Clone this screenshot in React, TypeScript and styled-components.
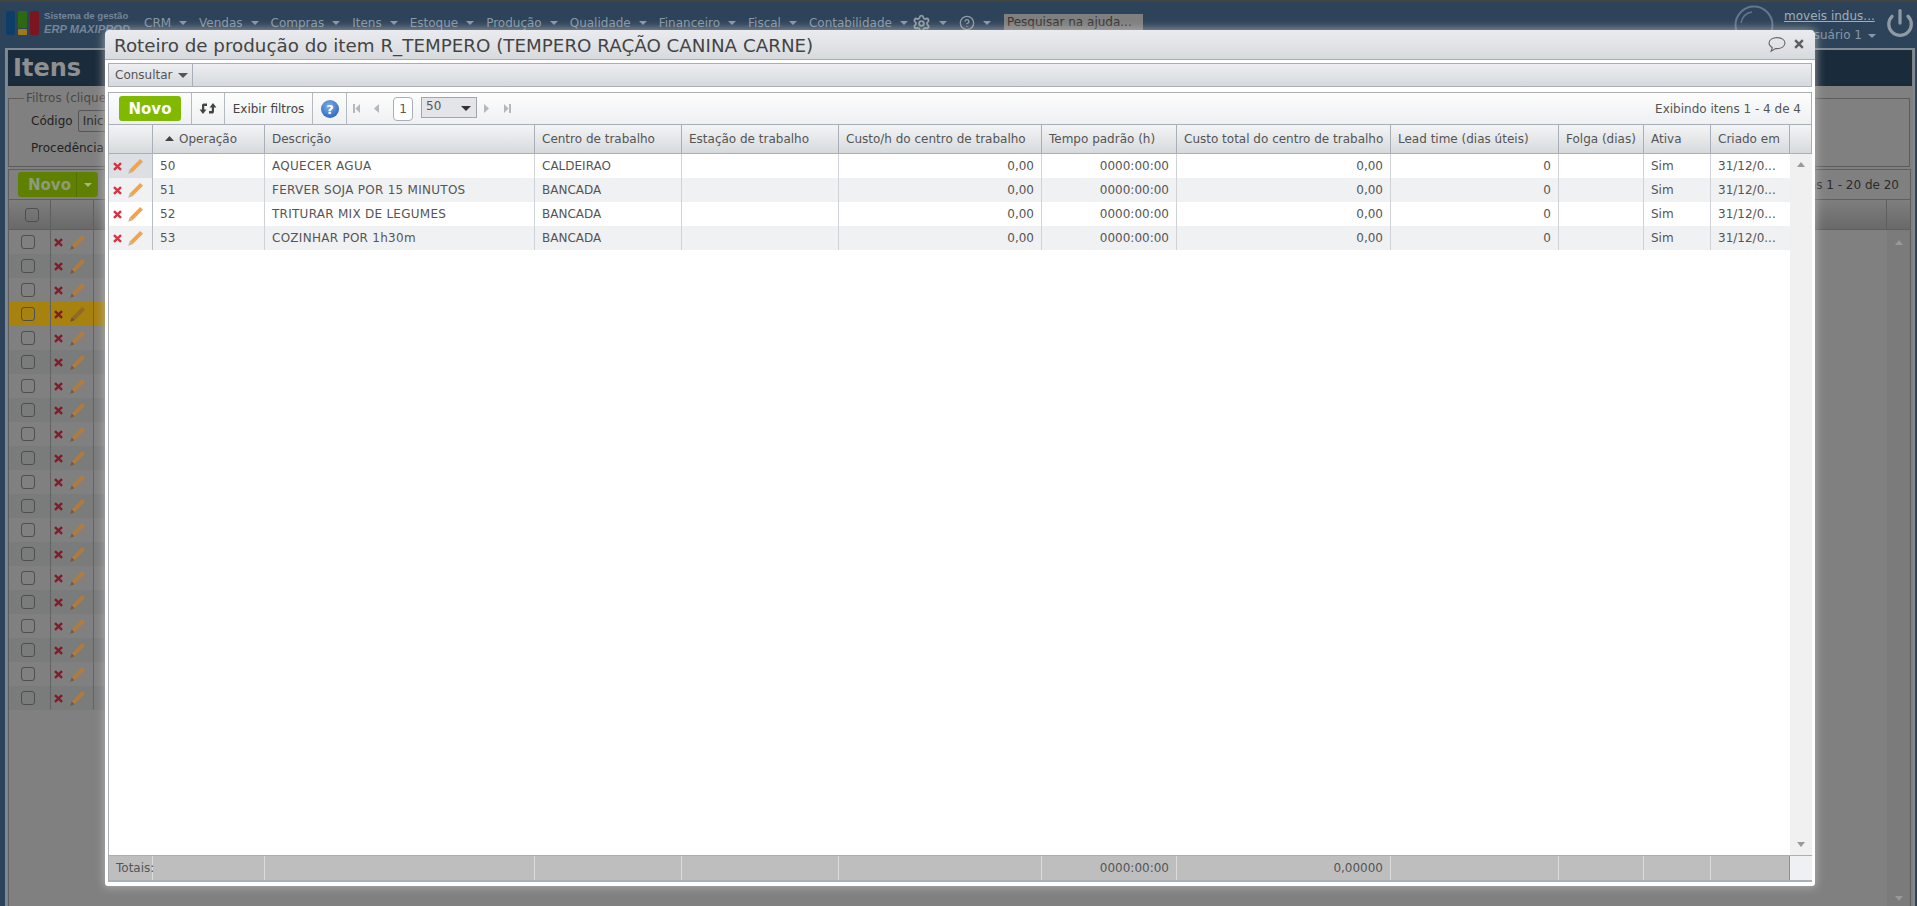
import React from "react";
import styled, { createGlobalStyle } from "styled-components";
import { CircleHelp, Settings, Power } from "lucide-react";

const GlobalStyle = createGlobalStyle`
  html, body { margin: 0; padding: 0; overflow: hidden; }
  * { box-sizing: border-box; }
  body { font-family: "DejaVu Sans", Verdana, sans-serif; font-size: 12px; color: #555; }
`;

const Page = styled.div`
  position: relative;
  width: 1917px;
  height: 906px;
  overflow: hidden;
  background: #2d4359;
  border-top: 2px solid #45453f;
  display: flex;
  flex-direction: column;
`;

/* ---------- dimmed page behind the dialog ---------- */
const TopBar = styled.header`
  height: 46px;
  padding-left: 6px;
  display: flex;
  align-items: flex-start;
  color: #8798a8;
`;
const Logo = styled.svg`
  width: 33px;
  height: 25px;
  margin-top: 9px;
  flex: none;
`;
const Brand = styled.div`
  margin: 7px 0 0 5px;
  width: 100px;
  flex: none;
  font-family: "Liberation Sans", Arial, sans-serif;
  font-size: 9.6px;
  font-weight: 700;
  line-height: 13px;
  white-space: nowrap;
  color: #74869a;
  b { display: block; font-size: 11.2px; font-style: italic; line-height: 15px; }
`;
const Nav = styled.nav`
  display: flex;
  align-items: center;
  height: 18px;
  margin-top: 12px;
  gap: 12px;
`;
const NavItem = styled.span`
  display: flex;
  align-items: center;
  gap: 8px;
  white-space: nowrap;
`;
const GearItem = styled(NavItem)`
  margin-left: -8px;
`;
const Caret = styled.i<{ $c?: string; $w?: number }>`
  display: inline-block;
  width: 0;
  height: 0;
  flex: none;
  border-left: ${(p) => p.$w ?? 4}px solid transparent;
  border-right: ${(p) => p.$w ?? 4}px solid transparent;
  border-top: ${(p) => p.$w ?? 4}px solid ${(p) => p.$c ?? "#8798a8"};
`;
const HelpSearch = styled.div`
  width: 139px;
  height: 18px;
  margin-left: 1px;
  padding: 1px 3px;
  background: #7f7f7f;
  color: #333;
  font-size: 12px;
  white-space: nowrap;
`;
const UserArea = styled.div`
  margin-left: auto;
  display: flex;
  align-items: flex-start;
  color: #8798a8;
`;
const Avatar = styled.svg`
  width: 40px;
  height: 40px;
  margin: 3px 10px 0 0;
  flex: none;
`;
const UserText = styled.div`
  width: 100px;
  margin-top: 5px;
  line-height: 19px;
  a { display: block; text-decoration: underline; color: #a0adb9; }
  span { display: flex; align-items: center; gap: 6px; justify-content: flex-end; padding-right: 8px; }
`;
const PowerBox = styled.div`
  width: 33px;
  margin-top: 6px;
  padding-left: 1px;
`;

const Panel = styled.main`
  flex: 1;
  margin: 0 2px 0 5px;
  padding: 0 1px;
  border: 2px solid #808a94;
  border-bottom: 0;
  background: #808080;
  display: flex;
  flex-direction: column;
`;
const PanelHead = styled.div`
  height: 36px;
  flex: none;
  background: #1a2b3b;
  color: #8f8f8f;
  font-size: 24px;
  font-weight: 700;
  line-height: 36px;
  padding-left: 5px;
`;
const Filters = styled.fieldset`
  height: 76px;
  margin: 5px 2px 0 0;
  padding: 2px 0 0;
  border: 1px solid #5c5c5c;
  flex: none;
  color: #222;
  legend { margin-left: 15px; padding: 0 2px; color: #484848; font-size: 12px; white-space: nowrap; }
`;
const FilterRow = styled.div`
  display: flex;
  align-items: center;
  gap: 5px;
  height: 27px;
  padding-left: 22px;
  white-space: nowrap;
`;
const FilterInput = styled.span`
  border: 1px solid #555;
  border-radius: 2px;
  height: 22px;
  width: 60px;
  padding: 3px 4px;
  color: #2a2a2a;
`;
const BackGrid = styled.section`
  flex: 1;
  margin: 2px 1px 0 0;
  border: 1px solid #5f5f5f;
  border-bottom: 0;
  display: flex;
  flex-direction: column;
`;
const BackBar = styled.div`
  height: 30px;
  flex: none;
  display: flex;
  align-items: center;
  justify-content: space-between;
  padding: 0 11px 0 9px;
  border-bottom: 1px solid #5f5f5f;
  color: #2b2b2b;
`;
const BackNovo = styled.div`
  width: 80px;
  height: 25px;
  border-radius: 3px;
  background: #5f8000;
  color: #8f9a7d;
  font-size: 15px;
  font-weight: 700;
  display: flex;
  align-items: center;
  justify-content: space-between;
  padding-left: 10px;
  span {
    width: 22px;
    height: 25px;
    border-left: 1px solid #527000;
    display: flex;
    align-items: center;
    justify-content: center;
  }
  i { border-top-color: #a5b48b; }
`;
const BackHead = styled.div`
  display: grid;
  grid-template-columns: 42px 43px 1fr 23px;
  height: 30px;
  background: linear-gradient(#7e7e7e, #696969);
  border-bottom: 1px solid #5f5f5f;
  > span { display: flex; align-items: center; border-right: 1px solid #5f5f5f; }
  > span:last-child { border-right: 0; }
`;
const BackRow = styled.div<{ $bg: string }>`
  display: grid;
  grid-template-columns: 42px 43px 1fr 23px;
  height: 24px;
  background: linear-gradient(${(p) => p.$bg}, ${(p) => p.$bg}) no-repeat;
  background-size: 1000px 100%;
  > span { display: flex; align-items: center; }
  > span:nth-child(-n + 2) { border-right: 1px solid #636363; }
  > span:last-child { background: #7b7b7b; justify-content: center; }
`;
const CheckBox = styled.b<{ $ml: number }>`
  display: block;
  width: 14px;
  height: 14px;
  margin-left: ${(p) => p.$ml}px;
  border: 1.5px solid #4f4f4f;
  border-radius: 3px;
`;
const BackActions = styled.span`
  gap: 6px;
  padding-left: 3px;
`;
const BackFill = styled.div`
  flex: 1;
  display: flex;
  justify-content: flex-end;
`;
const BackScroll = styled.div`
  width: 23px;
  background: #7b7b7b;
  display: flex;
  align-items: flex-end;
  justify-content: center;
  padding-bottom: 5px;
`;

/* ---------- dialog ---------- */
const Dialog = styled.div`
  position: absolute;
  left: 105px;
  top: 28px;
  width: 1710px;
  height: 856px;
  background: #fff;
  border-radius: 5px 5px 3px 3px;
  box-shadow: 0 0 10px 1px rgba(190, 190, 190, 0.75);
  display: flex;
  flex-direction: column;
  padding: 0 3px 4px;
`;
const TitleBar = styled.div`
  height: 30px;
  margin: 0 -3px;
  flex: none;
  padding: 2px 11px 0 9px;
  display: flex;
  align-items: center;
  justify-content: space-between;
  border-radius: 5px 5px 0 0;
  border-bottom: 1px solid #a8afb6;
  background: linear-gradient(#eaebee, #d8dbde);
`;
const Title = styled.h1`
  margin: 0;
  font-size: 18.3px;
  font-weight: 400;
  color: #444;
  white-space: nowrap;
`;
const TitleTools = styled.div`
  display: flex;
  align-items: center;
  gap: 7px;
  margin-top: -3px;
`;
const MenuBar = styled.div`
  height: 24px;
  margin-top: 3px;
  flex: none;
  display: flex;
  border: 1px solid #a8afb6;
  background: linear-gradient(#eceef0, #d6d9dd);
`;
const MenuButton = styled.div`
  display: flex;
  align-items: center;
  gap: 5px;
  width: 84px;
  padding-left: 6px;
  border-right: 1px solid #a8afb6;
  color: #555;
`;
const GridBox = styled.section`
  flex: 1;
  margin-top: 5px;
  min-height: 0;
  display: flex;
  flex-direction: column;
  border: 1px solid #a8afb6;
  border-bottom-width: 2px;
`;
const Toolbar = styled.div`
  height: 31px;
  flex: none;
  display: flex;
  align-items: center;
  background: linear-gradient(#fdfdfd, #eef0f2);
  padding-left: 10px;
`;
const NovoButton = styled.button`
  width: 62px;
  height: 25px;
  margin-right: 10px;
  padding: 0;
  border: 0;
  border-radius: 3px;
  background: #80b900;
  color: #fff;
  font: 700 15px "DejaVu Sans", sans-serif;
`;
const ToolCell = styled.div<{ $w: number }>`
  width: ${(p) => p.$w}px;
  height: 31px;
  flex: none;
  display: flex;
  align-items: center;
  justify-content: center;
  border-left: 1px solid #b5bac0;
  color: #444;
  white-space: nowrap;
`;
const Pager = styled.div`
  display: flex;
  align-items: center;
  height: 31px;
  border-left: 1px solid #b5bac0;
  padding-left: 5px;
`;
const PageBox = styled.div`
  width: 20px;
  height: 24px;
  margin: 0 8px 0 11px;
  border: 1px solid #a8afb6;
  border-radius: 4px;
  background: #fff;
  text-align: center;
  line-height: 22px;
  color: #555;
`;
const SizeSelect = styled.div`
  width: 56px;
  height: 21px;
  margin: -2px 4px 0 0;
  padding: 1px 4px;
  border: 1px solid #a0a6ae;
  background: #e3e5e8;
  display: flex;
  justify-content: space-between;
  color: #555;
  i { margin: 7px 1px 0 0; }
`;
const PagerStatus = styled.div`
  margin-left: auto;
  padding-right: 10px;
  color: #555;
`;
const HeadRow = styled.div`
  display: grid;
  grid-template-columns: var(--cols);
  height: 30px;
  flex: none;
  border-top: 1px solid #a8afb6;
  border-bottom: 1px solid #a8afb6;
  background: linear-gradient(#f3f4f5, #d7dadd);
`;
const HeadCell = styled.div`
  display: flex;
  align-items: center;
  gap: 5px;
  padding: 0 0 1px 7px;
  border-right: 1px solid #a8afb6;
  white-space: nowrap;
  overflow: hidden;
  color: #555;
  &:last-child { border-right: 0; }
`;
const HeadSortCell = styled(HeadCell)`
  padding-left: 12px;
`;
const BodyWrap = styled.div`
  flex: 1;
  min-height: 0;
  display: flex;
`;
const Rows = styled.div`
  flex: 1;
`;
const DataRow = styled.div<{ $odd: boolean }>`
  display: grid;
  grid-template-columns: var(--body-cols);
  height: 24px;
  background: ${(p) => (p.$odd ? "#f0f1f3" : "#fff")};
`;
const Cell = styled.div<{ $right?: boolean }>`
  display: flex;
  align-items: center;
  justify-content: ${(p) => (p.$right ? "flex-end" : "flex-start")};
  padding: 0 7px;
  border-right: 1px solid #cfd3d8;
  white-space: nowrap;
  color: #555;
  &:last-child { border-right: 0; }
`;
const DescCell = styled(Cell)`
  letter-spacing: 0.27px;
`;
const ActionCell = styled.div<{ $active: boolean }>`
  display: flex;
  align-items: center;
  gap: 5px;
  padding-left: 4px;
  border-right: 1px solid #b8bdc3;
  background: ${(p) => (p.$active ? "#dcdfe3" : "transparent")};
`;
const ScrollTrack = styled.div`
  width: 22px;
  flex: none;
  background: #f0f0f0;
  display: flex;
  flex-direction: column;
  align-items: center;
  justify-content: space-between;
  padding: 8px 0 8px;
`;
const ArrowUp = styled.i`
  width: 0;
  height: 0;
  border-left: 4.5px solid transparent;
  border-right: 4.5px solid transparent;
  border-bottom: 5px solid #999;
`;
const ArrowDown = styled(ArrowUp)`
  border-bottom: 0;
  border-top: 5px solid #999;
`;
const TotalsRow = styled.div`
  display: grid;
  grid-template-columns: var(--cols);
  height: 25px;
  flex: none;
  border-top: 1px solid #a8afb6;
  background: #bebebe;
`;
const TotalCell = styled.div`
  display: flex;
  align-items: center;
  justify-content: flex-end;
  padding: 0 7px;
  border-right: 1px solid #dcdcdc;
  white-space: nowrap;
  color: #555;
  &:first-child { justify-content: flex-start; }
  &:nth-last-child(2) { border-right-color: #8f8f8f; }
  &:last-child { background: #eef0f3; border-right: 0; }
`;

const Pencil = ({ body = "#f3a349", tip = "#c9b08e" }: { body?: string; tip?: string }) => (
  <svg width="17" height="17" viewBox="0 0 17 17" style={{ flex: "none" }}>
    <path d="M13.200 1 16 3.800 5.500 14.300 2.700 11.500Z" fill={body} />
    <path d="M2.700 11.500 5.500 14.300 1.200 15.800Z" fill={tip} />
  </svg>
);
const Cross = ({ dim }: { dim?: boolean }) => (
  <svg width="9" height="9" viewBox="0 0 9 9" style={{ flex: "none" }}>
    <path d="M1 1.200 8 7.800M8 1.200 1 7.800" stroke={dim ? "#861a26" : "#d33442"} strokeWidth="2.4" />
  </svg>
);

const cols = [44, 112, 270, 147, 157, 203, 135, 214, 168, 85, 67, 79, 22];
const headers = [
  "", "Operação", "Descrição", "Centro de trabalho", "Estação de trabalho",
  "Custo/h do centro de trabalho", "Tempo padrão (h)", "Custo total do centro de trabalho",
  "Lead time (dias úteis)", "Folga (dias)", "Ativa", "Criado em", "",
];
const rows = [
  ["50", "AQUECER AGUA", "CALDEIRAO"],
  ["51", "FERVER SOJA POR 15 MINUTOS", "BANCADA"],
  ["52", "TRITURAR MIX DE LEGUMES", "BANCADA"],
  ["53", "COZINHAR POR 1h30m", "BANCADA"],
];
const navItems = ["CRM", "Vendas", "Compras", "Itens", "Estoque", "Produção", "Qualidade", "Financeiro", "Fiscal", "Contabilidade"];
const backRows = Array.from({ length: 20 }, (_, i) => i);

export default function App() {
  const gridVars = {
    "--cols": cols.map((c) => `${c}px`).join(" "),
    "--body-cols": cols.slice(0, -1).map((c) => `${c}px`).join(" "),
  } as React.CSSProperties;

  return (
    <Page>
      <GlobalStyle />
      <TopBar>
        <Logo viewBox="0 0 33 25">
          <rect x="0" y="0" width="9" height="24" rx="2" fill="#0e3e68" />
          <rect x="12" y="0" width="9" height="17" rx="1" fill="#2c6a12" />
          <rect x="12" y="18" width="9" height="6" rx="1" fill="#9a7a1a" />
          <rect x="24" y="0" width="9" height="24" rx="2" fill="#7b1620" />
        </Logo>
        <Brand>
          Sistema de gestão
          <b>ERP MAXIPROD</b>
        </Brand>
        <Nav>
          {navItems.map((n) => (
            <NavItem key={n}>
              {n}
              <Caret />
            </NavItem>
          ))}
          <GearItem>
            <Settings size={19} color="#8f9aa5" strokeWidth={2.4} />
            <Caret />
          </GearItem>
          <NavItem>
            <CircleHelp size={16} color="#8f9aa5" />
            <Caret />
          </NavItem>
          <HelpSearch>Pesquisar na ajuda...</HelpSearch>
        </Nav>
        <UserArea>
          <Avatar viewBox="0 0 40 40">
            <circle cx="20" cy="20" r="18.5" fill="none" stroke="#64778a" strokeWidth="2" />
            <path d="M7 18C8 12 12 8 18 7" fill="none" stroke="#64778a" strokeWidth="1.500" />
          </Avatar>
          <UserText>
            <a>moveis indus...</a>
            <span>
              Usuário 1
              <Caret />
            </span>
          </UserText>
          <PowerBox>
            <Power size={30} color="#8f9aa5" strokeWidth={2.6} />
          </PowerBox>
        </UserArea>
      </TopBar>

      <Panel>
        <PanelHead>Itens</PanelHead>
        <Filters>
          <legend>Filtros (clique para expandir)</legend>
          <FilterRow>
            Código
            <FilterInput>Inicia</FilterInput>
          </FilterRow>
          <FilterRow>Procedência</FilterRow>
        </Filters>
        <BackGrid>
          <BackBar>
            <BackNovo>
              Novo
              <span>
                <Caret />
              </span>
            </BackNovo>
            <span>Exibindo itens 1 - 20 de 20</span>
          </BackBar>
          <BackHead>
            <span>
              <CheckBox $ml={16} />
            </span>
            <span />
            <span />
            <span />
          </BackHead>
          {backRows.map((i) => (
            <BackRow key={i} $bg={i === 3 ? "#a8820f" : i % 2 ? "#797c7b" : "#808080"}>
              <span>
                <CheckBox $ml={12} />
              </span>
              <BackActions>
                <Cross dim />
                {i === 3 ? <Pencil body="#8f6a2a" tip="#5f5040" /> : <Pencil body="#b57a35" tip="#6d5c48" />}
              </BackActions>
              <span />
              <span>{i === 0 && <ArrowUp />}</span>
            </BackRow>
          ))}
          <BackFill>
            <BackScroll>
              <ArrowDown />
            </BackScroll>
          </BackFill>
        </BackGrid>
      </Panel>

      <Dialog style={gridVars}>
        <TitleBar>
          <Title>Roteiro de produção do item R_TEMPERO (TEMPERO RAÇÃO CANINA CARNE)</Title>
          <TitleTools>
            <svg width="20" height="17" viewBox="0 0 18 16">
              <path d="M9 1.500C4.800 1.500 1.500 3.700 1.500 6.700C1.500 8.500 2.700 10 4.600 11L3.400 14.300L7.600 11.800C8.100 11.900 8.500 11.900 9 11.900C13.200 11.900 16.500 9.700 16.500 6.700C16.500 3.700 13.200 1.500 9 1.500Z" fill="none" stroke="#666" strokeWidth="1" />
            </svg>
            <svg width="10" height="10" viewBox="0 0 10 10">
              <path d="M1.200 1.200 8.800 8.800M8.800 1.200 1.200 8.800" stroke="#5f5f5f" strokeWidth="2.500" />
            </svg>
          </TitleTools>
        </TitleBar>
        <MenuBar>
          <MenuButton>
            Consultar
            <Caret $c="#555" $w={5} />
          </MenuButton>
        </MenuBar>
        <GridBox>
          <Toolbar>
            <NovoButton>Novo</NovoButton>
            <ToolCell $w={33}>
              <svg width="18" height="15" viewBox="0 0 18 15">
                <path d="M8 2.500H5C3.600 2.500 3 3.400 3 4.800V8.500H.6L4 13l3.400-4.500H5.200V5h2.800Z M10 12.500h3C14.400 12.500 15 11.600 15 10.200V6.500h2.400L14 2 10.600 6.500h2.200V10H10Z" fill="#444" />
              </svg>
            </ToolCell>
            <ToolCell $w={88}>Exibir filtros</ToolCell>
            <ToolCell $w={34}>
              <svg width="18" height="18" viewBox="0 0 18 18">
                <defs>
                  <radialGradient id="helpBlue" cx="45%" cy="35%" r="70%">
                    <stop offset="0" stopColor="#7fb0ec" />
                    <stop offset="1" stopColor="#2a63b8" />
                  </radialGradient>
                </defs>
                <circle cx="9" cy="9" r="9" fill="url(#helpBlue)" />
                <text x="9" y="14" textAnchor="middle" fontSize="13" fontWeight="700" fill="#fff" fontFamily="DejaVu Sans, sans-serif">?</text>
              </svg>
            </ToolCell>
            <Pager>
              <svg width="30" height="11" viewBox="0 0 30 11">
                <path d="M1 1h2v9H1ZM8 1v9L3.500 5.500ZM27 1v9l-5-4.500Z" fill="#b4b8bd" />
              </svg>
              <PageBox>1</PageBox>
              <SizeSelect>
                50
                <Caret $c="#333" $w={5} />
              </SizeSelect>
              <svg width="32" height="11" viewBox="0 0 32 11" style={{ marginLeft: 2 }}>
                <path d="M1 1v9l5-4.500ZM21 1v9l4.500-4.500ZM26 1h2v9h-2Z" fill="#b4b8bd" />
              </svg>
            </Pager>
            <PagerStatus>Exibindo itens 1 - 4 de 4</PagerStatus>
          </Toolbar>
          <HeadRow>
            {headers.map((h, i) =>
              i === 1 ? (
                <HeadSortCell key={i}>
                  <svg width="9" height="5" viewBox="0 0 9 5">
                    <path d="M0 5 4.500 0 9 5Z" fill="#444" />
                  </svg>
                  {h}
                </HeadSortCell>
              ) : (
                <HeadCell key={i}>{h}</HeadCell>
              )
            )}
          </HeadRow>
          <BodyWrap>
            <Rows>
              {rows.map((r, i) => (
                <DataRow key={r[0]} $odd={i % 2 === 1}>
                  <ActionCell $active={i === 0}>
                    <Cross />
                    <Pencil />
                  </ActionCell>
                  <Cell>{r[0]}</Cell>
                  <DescCell>{r[1]}</DescCell>
                  <Cell>{r[2]}</Cell>
                  <Cell />
                  <Cell $right>0,00</Cell>
                  <Cell $right>0000:00:00</Cell>
                  <Cell $right>0,00</Cell>
                  <Cell $right>0</Cell>
                  <Cell />
                  <Cell>Sim</Cell>
                  <Cell>31/12/0...</Cell>
                </DataRow>
              ))}
            </Rows>
            <ScrollTrack>
              <ArrowUp />
              <ArrowDown />
            </ScrollTrack>
          </BodyWrap>
          <TotalsRow>
            <TotalCell>Totais:</TotalCell>
            <TotalCell />
            <TotalCell />
            <TotalCell />
            <TotalCell />
            <TotalCell />
            <TotalCell>0000:00:00</TotalCell>
            <TotalCell>0,00000</TotalCell>
            <TotalCell />
            <TotalCell />
            <TotalCell />
            <TotalCell />
            <TotalCell />
          </TotalsRow>
        </GridBox>
      </Dialog>
    </Page>
  );
}
